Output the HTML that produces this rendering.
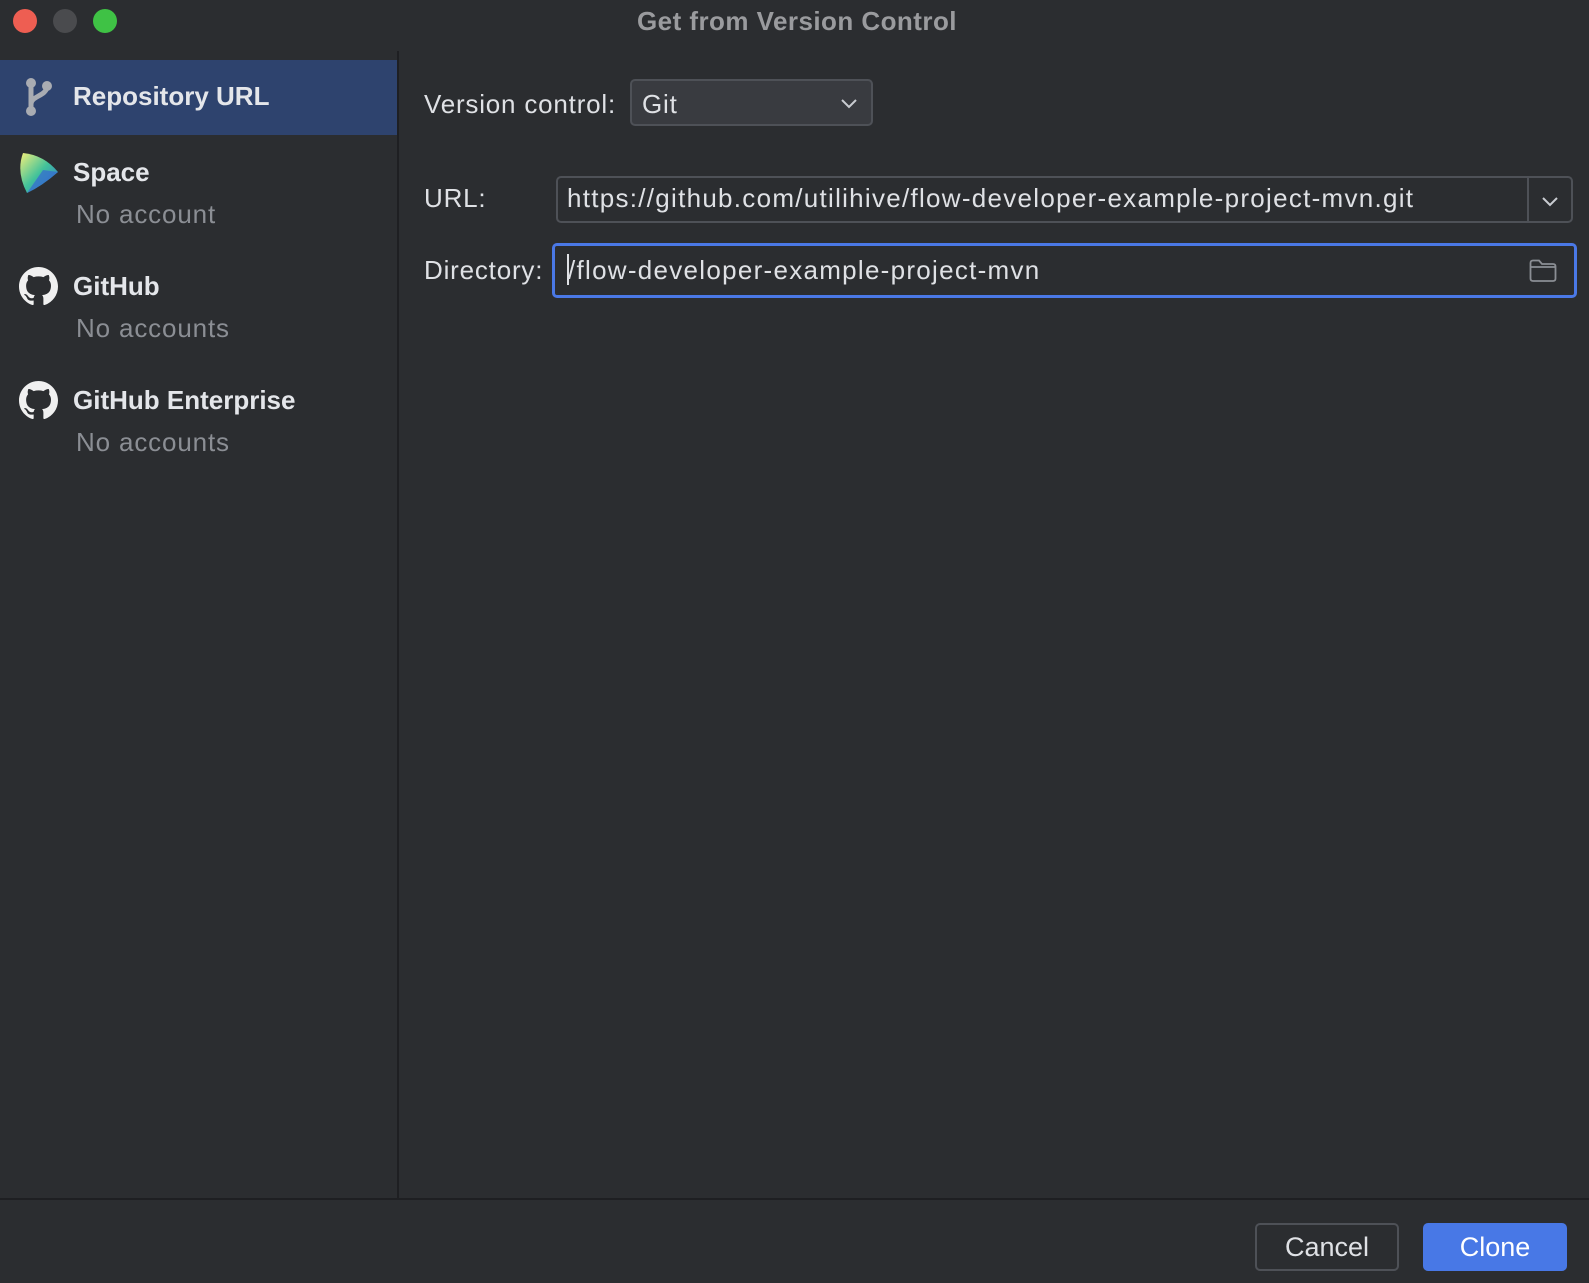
<!DOCTYPE html>
<html><head><meta charset="utf-8"><style>
*{margin:0;padding:0;box-sizing:border-box}
html,body{width:1589px;height:1283px;overflow:hidden;background:#2b2d30;font-family:"Liberation Sans",sans-serif;color:#dfe1e5}
.abs{position:absolute}
.t{white-space:nowrap;line-height:1}
.dot{position:absolute;width:24px;height:24px;border-radius:50%;top:9px}
.b{font-weight:bold}
.sub{color:#8b8e94;font-size:26px;letter-spacing:0.85px}
.lbl{font-size:26px;color:#dfe1e5;letter-spacing:0.8px}
.fld{letter-spacing:1.28px}
</style></head><body>
<div class="dot" style="left:13px;background:#ee5e52"></div>
<div class="dot" style="left:53px;background:#4a4b4e"></div>
<div class="dot" style="left:93px;background:#3fc245"></div>
<div class="abs t b" style="left:637px;top:8px;font-size:26px;color:#9a9b9e;letter-spacing:0.45px">Get from Version Control</div>

<div class="abs" style="left:397px;top:51px;width:2px;height:1148px;background:#1e1f22"></div>
<div class="abs" style="left:0;top:1198px;width:1589px;height:2px;background:#1e1f22"></div>

<div class="abs" style="left:0;top:60px;width:397px;height:75px;background:#2e436e"></div>
<svg class="abs" style="left:20px;top:74px" width="40" height="46" viewBox="20 74 40 46">
<path d="M31 83 V111 M31 104 C31 96 47 96 47 86" stroke="#a9acb2" stroke-width="5" fill="none" stroke-linecap="round"/>
<circle cx="31" cy="83" r="5" fill="#a9acb2"/><circle cx="47" cy="86" r="5" fill="#a9acb2"/><circle cx="31" cy="111" r="5" fill="#a9acb2"/>
</svg>
<div class="abs t b" style="left:73px;top:83px;font-size:26px;color:#e4e6ea">Repository URL</div>

<svg class="abs" style="left:18px;top:150px" width="44" height="46" viewBox="18 150 44 46">
<defs><linearGradient id="g" x1="0" y1="0" x2="1" y2="1"><stop offset="0" stop-color="#f3ef7a"/><stop offset=".5" stop-color="#42c29a"/><stop offset="1" stop-color="#2f6fd6"/></linearGradient></defs>
<path d="M23 153 Q44 155 58 172 Q42 186 27 193 Q16 172 23 153Z" fill="url(#g)"/>
<path d="M43 170 L58 172 Q42 186 27 193Z" fill="#3468d1" opacity=".7"/>
</svg>
<div class="abs t b" style="left:73px;top:159px;font-size:26px;color:#e4e6ea">Space</div>
<div class="abs t sub" style="left:76px;top:201px">No account</div>

<svg class="abs" style="left:19px;top:267px" width="39" height="39" viewBox="0 0 16 16"><path fill="#f0f0f0" d="M8 0C3.58 0 0 3.58 0 8c0 3.54 2.29 6.53 5.47 7.59.4.07.55-.17.55-.38 0-.19-.01-.82-.01-1.49-2.01.37-2.53-.49-2.69-.94-.09-.23-.48-.94-.82-1.13-.28-.15-.68-.52-.01-.53.63-.01 1.08.58 1.23.82.72 1.21 1.87.87 2.33.66.07-.52.28-.87.51-1.07-1.78-.2-3.64-.89-3.64-3.95 0-.87.31-1.59.82-2.15-.08-.2-.36-1.02.08-2.12 0 0 .67-.21 2.2.82.64-.18 1.32-.27 2-.27.68 0 1.36.09 2 .27 1.53-1.04 2.2-.82 2.2-.82.44 1.1.16 1.92.08 2.12.51.56.82 1.27.82 2.15 0 3.07-1.87 3.75-3.65 3.95.29.25.54.73.54 1.48 0 1.07-.01 1.93-.01 2.2 0 .21.15.46.55.38A8.013 8.013 0 0016 8c0-4.42-3.58-8-8-8z"/></svg>
<div class="abs t b" style="left:73px;top:273px;font-size:26px;color:#e4e6ea">GitHub</div>
<div class="abs t sub" style="left:76px;top:315px">No accounts</div>

<svg class="abs" style="left:19px;top:381px" width="39" height="39" viewBox="0 0 16 16"><path fill="#f0f0f0" d="M8 0C3.58 0 0 3.58 0 8c0 3.54 2.29 6.53 5.47 7.59.4.07.55-.17.55-.38 0-.19-.01-.82-.01-1.49-2.01.37-2.53-.49-2.69-.94-.09-.23-.48-.94-.82-1.13-.28-.15-.68-.52-.01-.53.63-.01 1.08.58 1.23.82.72 1.21 1.87.87 2.33.66.07-.52.28-.87.51-1.07-1.78-.2-3.64-.89-3.64-3.95 0-.87.31-1.59.82-2.15-.08-.2-.36-1.02.08-2.12 0 0 .67-.21 2.2.82.64-.18 1.32-.27 2-.27.68 0 1.36.09 2 .27 1.53-1.04 2.2-.82 2.2-.82.44 1.1.16 1.92.08 2.12.51.56.82 1.27.82 2.15 0 3.07-1.87 3.75-3.65 3.95.29.25.54.73.54 1.48 0 1.07-.01 1.93-.01 2.2 0 .21.15.46.55.38A8.013 8.013 0 0016 8c0-4.42-3.58-8-8-8z"/></svg>
<div class="abs t b" style="left:73px;top:387px;font-size:26px;color:#e4e6ea">GitHub Enterprise</div>
<div class="abs t sub" style="left:76px;top:429px">No accounts</div>

<div class="abs t lbl" style="left:424px;top:91px">Version control:</div>
<div class="abs" style="left:630px;top:79px;width:243px;height:47px;border:2px solid #4e5157;border-radius:5px;background:#393b40"></div>
<div class="abs t lbl" style="left:642px;top:91px">Git</div>
<svg class="abs" style="left:840px;top:97px" width="18" height="12"><path d="M2 3 L9 10 L16 3" stroke="#c9ccd1" stroke-width="2" fill="none"/></svg>

<div class="abs t lbl" style="left:424px;top:185px">URL:</div>
<div class="abs" style="left:556px;top:176px;width:1017px;height:47px;border:2px solid #4e5157;border-radius:5px"></div>
<div class="abs" style="left:1527px;top:176px;width:2px;height:47px;background:#4e5157"></div>
<svg class="abs" style="left:1541px;top:195px" width="18" height="12"><path d="M2 3 L9 10 L16 3" stroke="#c9ccd1" stroke-width="2" fill="none"/></svg>
<div class="abs t lbl fld" style="left:567px;top:185px">https://github.com/utilihive/flow-developer-example-project-mvn.git</div>

<div class="abs t lbl" style="left:424px;top:257px">Directory:</div>
<div class="abs" style="left:552px;top:243px;width:1025px;height:55px;border:3px solid #4a78e6;border-radius:5px"></div>
<div class="abs" style="left:567px;top:254px;width:2px;height:31px;background:#dfe1e5"></div>
<div class="abs t lbl fld" style="left:568px;top:257px">/flow-developer-example-project-mvn</div>
<svg class="abs" style="left:1528px;top:258px" width="30" height="26"><path d="M2.5 5 Q2.5 2.5 5 2.5 H11 L14 6 H25 Q27.5 6 27.5 8.5 V20.5 Q27.5 23 25 23 H5 Q2.5 23 2.5 20.5Z M2.5 9 H27.5" stroke="#8b8e94" stroke-width="1.8" fill="none"/></svg>

<div class="abs" style="left:1255px;top:1223px;width:144px;height:48px;border:2px solid #4e5157;border-radius:5px"></div>
<div class="abs t" style="left:1255px;top:1234px;width:144px;text-align:center;font-size:27px;color:#dfe1e5">Cancel</div>
<div class="abs" style="left:1423px;top:1223px;width:144px;height:48px;background:#4878e6;border-radius:5px"></div>
<div class="abs t" style="left:1423px;top:1234px;width:144px;text-align:center;font-size:27px;color:#fff">Clone</div>
</body></html>
